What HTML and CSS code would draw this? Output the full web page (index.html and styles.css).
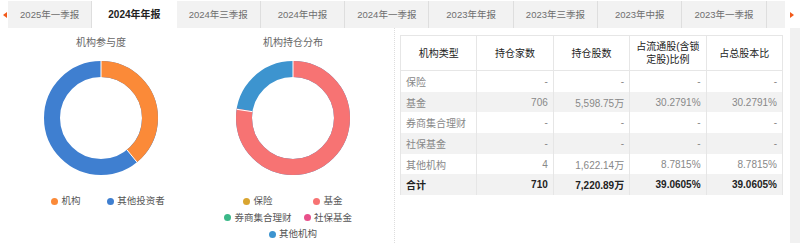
FILE: index.html
```html
<!DOCTYPE html>
<html lang="zh-CN">

<head>
    <meta charset="UTF-8">
    <meta name="viewport" content="width=device-width, initial-scale=1.0">
    <title>机构持仓</title>
    <link rel="stylesheet" href="styles.css">
</head>

<body>
    <div class="tabbar">
        <span class="arrow arrow-left"></span>
        <ul class="tabs">
            <li>2025年一季报</li>
            <li class="active">2024年年报</li>
            <li>2024年三季报</li>
            <li>2024年中报</li>
            <li>2024年一季报</li>
            <li>2023年年报</li>
            <li>2023年三季报</li>
            <li>2023年中报</li>
            <li>2023年一季报</li>
        </ul>
        <span class="arrow arrow-right"></span>
    </div>

    <div class="main">
        <div class="charts">
            <div class="chart">
                <div class="chart-title">机构参与度</div>
                <svg class="donut" width="130" height="130" viewBox="0 0 130 130">
                    <g transform="rotate(-90 65 65)">
                        <circle cx="65" cy="65" r="49" fill="none" stroke="#3f7fd0" stroke-width="16"></circle>
                        <circle cx="65" cy="65" r="49" fill="none" stroke="#fb8a38" stroke-width="16"
                            stroke-dasharray="120.26 307.88"></circle>
                    </g>
                    <line x1="65" y1="8" x2="65" y2="24" stroke="#fff" stroke-width="1"></line>
                    <line x1="101.1" y1="109.3" x2="90.9" y2="96.8" stroke="#fff" stroke-width="1"></line>
                </svg>
                <div class="legend">
                    <span class="item"><i class="dot" style="background:#fb8a38"></i>机构</span>
                    <span class="item"><i class="dot" style="background:#3f7fd0"></i>其他投资者</span>
                </div>
            </div>
            <div class="chart">
                <div class="chart-title">机构持仓分布</div>
                <svg class="donut" width="130" height="130" viewBox="0 0 130 130">
                    <g transform="rotate(-90 65 65)">
                        <circle cx="65" cy="65" r="49" fill="none" stroke="#3d94cf" stroke-width="16"></circle>
                        <circle cx="65" cy="65" r="49" fill="none" stroke="#f77373" stroke-width="16"
                            stroke-dasharray="238.67 307.88"></circle>
                    </g>
                    <line x1="65" y1="8" x2="65" y2="24" stroke="#fff" stroke-width="1"></line>
                    <line x1="8.7" y1="56.3" x2="24.5" y2="58.7" stroke="#fff" stroke-width="1"></line>
                </svg>
                <div class="legend">
                    <span class="item"><i class="dot" style="background:#d9a530"></i>保险</span>
                    <span class="item"><i class="dot" style="background:#f77373"></i>基金</span>
                    <span class="item"><i class="dot" style="background:#3bb888"></i>券商集合理财</span>
                    <span class="item"><i class="dot" style="background:#e8508a"></i>社保基金</span>
                    <span class="item"><i class="dot" style="background:#3d94cf"></i>其他机构</span>
                </div>
            </div>
        </div>

        <div class="table-wrap">
            <table class="holdings">
                <thead>
                    <tr>
                        <th>机构类型</th>
                        <th>持仓家数</th>
                        <th>持仓股数</th>
                        <th>占流通股(含锁<br>定股)比例</th>
                        <th>占总股本比</th>
                    </tr>
                </thead>
                <tbody>
                    <tr>
                        <td>保险</td>
                        <td>-</td>
                        <td>-</td>
                        <td>-</td>
                        <td>-</td>
                    </tr>
                    <tr class="alt">
                        <td>基金</td>
                        <td>706</td>
                        <td>5,598.75万</td>
                        <td>30.2791%</td>
                        <td>30.2791%</td>
                    </tr>
                    <tr>
                        <td>券商集合理财</td>
                        <td>-</td>
                        <td>-</td>
                        <td>-</td>
                        <td>-</td>
                    </tr>
                    <tr class="alt">
                        <td>社保基金</td>
                        <td>-</td>
                        <td>-</td>
                        <td>-</td>
                        <td>-</td>
                    </tr>
                    <tr>
                        <td>其他机构</td>
                        <td>4</td>
                        <td>1,622.14万</td>
                        <td>8.7815%</td>
                        <td>8.7815%</td>
                    </tr>
                    <tr class="alt total">
                        <td>合计</td>
                        <td>710</td>
                        <td>7,220.89万</td>
                        <td>39.0605%</td>
                        <td>39.0605%</td>
                    </tr>
                </tbody>
            </table>
        </div>

        <div class="scrollbar"></div>
    </div>
</body>

</html>
```

FILE: styles.css
```css
body {
    margin: 0;
    font-family: "Liberation Sans", "Noto Sans CJK SC", sans-serif;
    background: #fff;
    color: #555;
}

/* tab strip */
.tabbar {
    display: flex;
    align-items: stretch;
    height: 28px;
    padding-top: 1px;
    box-sizing: border-box;
}

.arrow {
    width: 8px;
    position: relative;
}

.arrow-right {
    width: 15px;
}

.arrow::after {
    content: "";
    position: absolute;
    top: 11px;
    width: 0;
    height: 0;
    border-top: 3px solid transparent;
    border-bottom: 3px solid transparent;
}

.arrow-left::after {
    left: 3px;
    border-right: 4px solid #f25a1a;
}

.arrow-right::after {
    left: 5px;
    border-left: 4px solid #f25a1a;
}

.tabs {
    display: flex;
    flex: 1;
    margin: 0;
    padding: 0;
    list-style: none;
    background: #f2f2f2;
}

.tabs li {
    width: 84.3px;
    flex: none;
    text-align: center;
    line-height: 27px;
    font-size: 9.5px;
    color: #6e6e6e;
    border-right: 1px solid #dedede;
    box-sizing: border-box;
}

.tabs li.active {
    background: #fff;
    color: #222;
    font-weight: bold;
    font-size: 10px;
    border-right: none;
}

/* content */
.main {
    display: flex;
    height: 215px;
}

.charts {
    display: flex;
    width: 395px;
    padding-left: 5px;
    box-sizing: border-box;
    border-right: 1px dotted #ddd;
}

.chart {
    width: 192px;
    display: flex;
    flex-direction: column;
    align-items: center;
}

.chart-title {
    margin-top: 8px;
    font-size: 10px;
    color: #666;
    line-height: 13px;
}

.donut {
    display: block;
    margin-top: 4px;
}

.legend {
    display: flex;
    flex-wrap: wrap;
    justify-content: center;
    width: 140px;
    margin-top: 10px;
    font-size: 9.5px;
    color: #555;
    line-height: 16.5px;
}

.legend .item {
    width: 70px;
    display: flex;
    align-items: center;
    justify-content: center;
    white-space: nowrap;
}

.dot {
    display: inline-block;
    flex: none;
    width: 7px;
    height: 7px;
    border-radius: 50%;
    margin-right: 3px;
}

/* table */
.table-wrap {
    width: 394px;
    padding: 7px 0 0 5px;
    box-sizing: border-box;
}

.holdings {
    width: 383px;
    border-collapse: collapse;
    table-layout: fixed;
    font-size: 10px;
    color: #888;
}

.holdings th {
    height: 34px;
    font-size: 10px;
    font-weight: normal;
    color: #222;
    text-align: center;
    line-height: 13px;
    border: 1px solid #e6e6e6;
    padding: 0 2px;
}

.holdings td {
    height: 20.7px;
    padding: 0 5px;
    text-align: right;
    border-left: 1px solid #e6e6e6;
    border-right: 1px solid #e6e6e6;
}

.holdings td:first-child {
    text-align: left;
}

.holdings tr.alt td {
    background: #f2f2f2;
}

.holdings tr.total td {
    color: #222;
    font-weight: bold;
}

.scrollbar {
    width: 10px;
    margin-left: 1px;
    background: #f1f1f1;
}
```
